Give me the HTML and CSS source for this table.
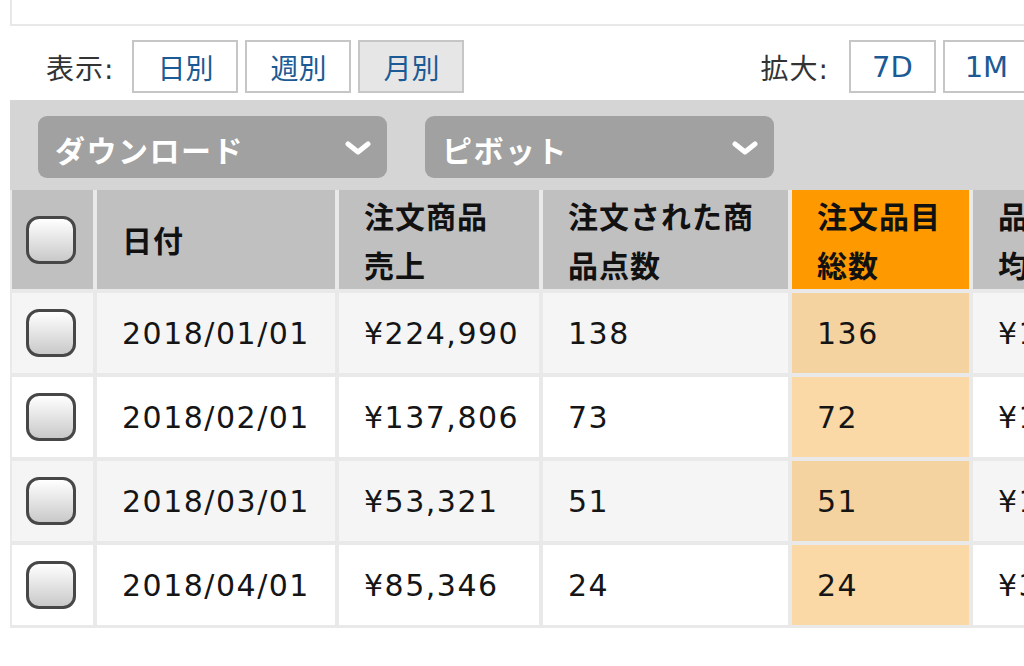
FILE: index.html
```html
<!DOCTYPE html>
<html lang="ja">
<head>
<meta charset="utf-8">
<title>レポート</title>
<link rel="stylesheet" href="styles.css">
</head>
<body>
<div class="page">
  <div class="topbox"></div>
  <div class="viewrow">
    <div class="group">
      <span class="label">表示:</span>
      <button class="btn">日別</button>
      <button class="btn">週別</button>
      <button class="btn active">月別</button>
    </div>
    <div class="group right">
      <span class="label">拡大:</span>
      <button class="btn sm">7D</button>
      <button class="btn sm">1M</button>
      <button class="btn sm">3M</button>
    </div>
  </div>
  <div class="toolbar">
    <div class="dropdown"><span>ダウンロード</span><svg class="chev" viewBox="0 0 26 14" width="26" height="14"><path d="M3 3 L13 11 L23 3" fill="none" stroke="#fff" stroke-width="5" stroke-linecap="round" stroke-linejoin="round"/></svg></div>
    <div class="dropdown"><span>ピボット</span><svg class="chev" viewBox="0 0 26 14" width="26" height="14"><path d="M3 3 L13 11 L23 3" fill="none" stroke="#fff" stroke-width="5" stroke-linecap="round" stroke-linejoin="round"/></svg></div>
  </div>
  <div class="grid">
    <div class="hd cb"><span class="check"></span></div>
    <div class="hd">日付</div>
    <div class="hd">注文商品<br>売上</div>
    <div class="hd">注文された商<br>品点数</div>
    <div class="hd hl">注文品目<br>総数</div>
    <div class="hd">品目ごとの平<br>均売上</div>

    <div class="td cb alt"><span class="check"></span></div>
    <div class="td alt">2018/01/01</div>
    <div class="td alt">¥224,990</div>
    <div class="td alt">138</div>
    <div class="td alt hl">136</div>
    <div class="td alt">¥1,654</div>

    <div class="td cb"><span class="check"></span></div>
    <div class="td">2018/02/01</div>
    <div class="td">¥137,806</div>
    <div class="td">73</div>
    <div class="td hl">72</div>
    <div class="td">¥1,914</div>

    <div class="td cb alt"><span class="check"></span></div>
    <div class="td alt">2018/03/01</div>
    <div class="td alt">¥53,321</div>
    <div class="td alt">51</div>
    <div class="td alt hl">51</div>
    <div class="td alt">¥1,045</div>

    <div class="td cb"><span class="check"></span></div>
    <div class="td">2018/04/01</div>
    <div class="td">¥85,346</div>
    <div class="td">24</div>
    <div class="td hl">24</div>
    <div class="td">¥3,556</div>
  </div>
</div>
</body>
</html>
```
FILE: styles.css
```css
html, body {
  margin: 0;
  padding: 0;
  background: #fff;
  overflow: hidden;
}
body {
  font-family: "DejaVu Sans", "Noto Sans CJK JP", sans-serif;
  color: #151515;
}
.page {
  width: 1300px;
  padding-left: 10px;
}
.topbox {
  height: 24px;
  border-left: 2px solid #e8e8e8;
  border-bottom: 2px solid #e8e8e8;
  background: #fff;
}
.viewrow {
  display: flex;
  align-items: center;
  height: 74px;
  padding-top: 14px;
  box-sizing: border-box;
  padding-bottom: 7px;
}
.group {
  display: flex;
  align-items: center;
  gap: 7px;
}
.group.right {
  margin-left: 296px;
}
.label {
  font-size: 28px;
  color: #333;
  margin-left: 36px;
  margin-right: 11px;
  letter-spacing: 1px;
}
.right .label {
  margin-left: 0;
  margin-right: 13px;
}
.btn {
  font-family: inherit;
  font-size: 28px;
  color: #1b5a94;
  background: #fff;
  border: 2px solid #c6c6c6;
  width: 106px;
  height: 53px;
  padding: 0;
  margin: 0;
  display: flex;
  align-items: center;
  justify-content: center;
}
.btn.sm {
  width: 87px;
  font-size: 29px;
}
.btn.active {
  background: #e6e6e6;
}
.toolbar {
  background: #d5d5d5;
  height: 90px;
  box-sizing: border-box;
  padding: 16px 0 12px 28px;
  display: flex;
  gap: 38px;
}
.dropdown {
  width: 349px;
  height: 62px;
  background: #a1a1a1;
  border-radius: 9px;
  box-sizing: border-box;
  padding: 0 16px 0 17px;
  display: flex;
  align-items: center;
  justify-content: space-between;
  color: #fff;
  font-weight: bold;
  font-size: 30px;
  font-family: "Noto Sans CJK JP", sans-serif;
}
.dropdown span {
  letter-spacing: 1.5px;
  padding-top: 3px;
}
.chev {
  display: block;
  margin-top: 2px;
}
.grid {
  display: grid;
  grid-template-columns: 81px 238px 200px 245px 177px 240px;
  grid-template-rows: 99px 80px 80px 80px 80px;
  column-gap: 4px;
  row-gap: 4px;
  background: #e9e9e9;
  padding: 0 0 3px 2px;
}
.hd {
  background: #c1c0c1;
  font-family: "Noto Sans CJK JP", sans-serif;
  font-weight: bold;
  font-size: 30px;
  line-height: 49px;
  letter-spacing: 1px;
  padding-left: 25px;
  display: flex;
  align-items: center;
  color: #111;
}
.hd.hl {
  background: #ff9900;
}
.td {
  background: #fff;
  font-size: 30px;
  letter-spacing: 1.5px;
  padding-left: 25px;
  display: flex;
  align-items: center;
  color: #151515;
}
.td.alt {
  background: #f5f5f5;
}
.td.hl {
  background: #fad9a6;
}
.td.alt.hl {
  background: #f4d3a0;
}
.cb {
  padding-left: 0;
  justify-content: center;
}
.check {
  display: block;
  width: 50px;
  height: 48px;
  box-sizing: border-box;
  border: 3px solid #474747;
  border-radius: 13px;
  background: linear-gradient(#ffffff, #c9c9c9);
  margin-left: -3px;
}
```
